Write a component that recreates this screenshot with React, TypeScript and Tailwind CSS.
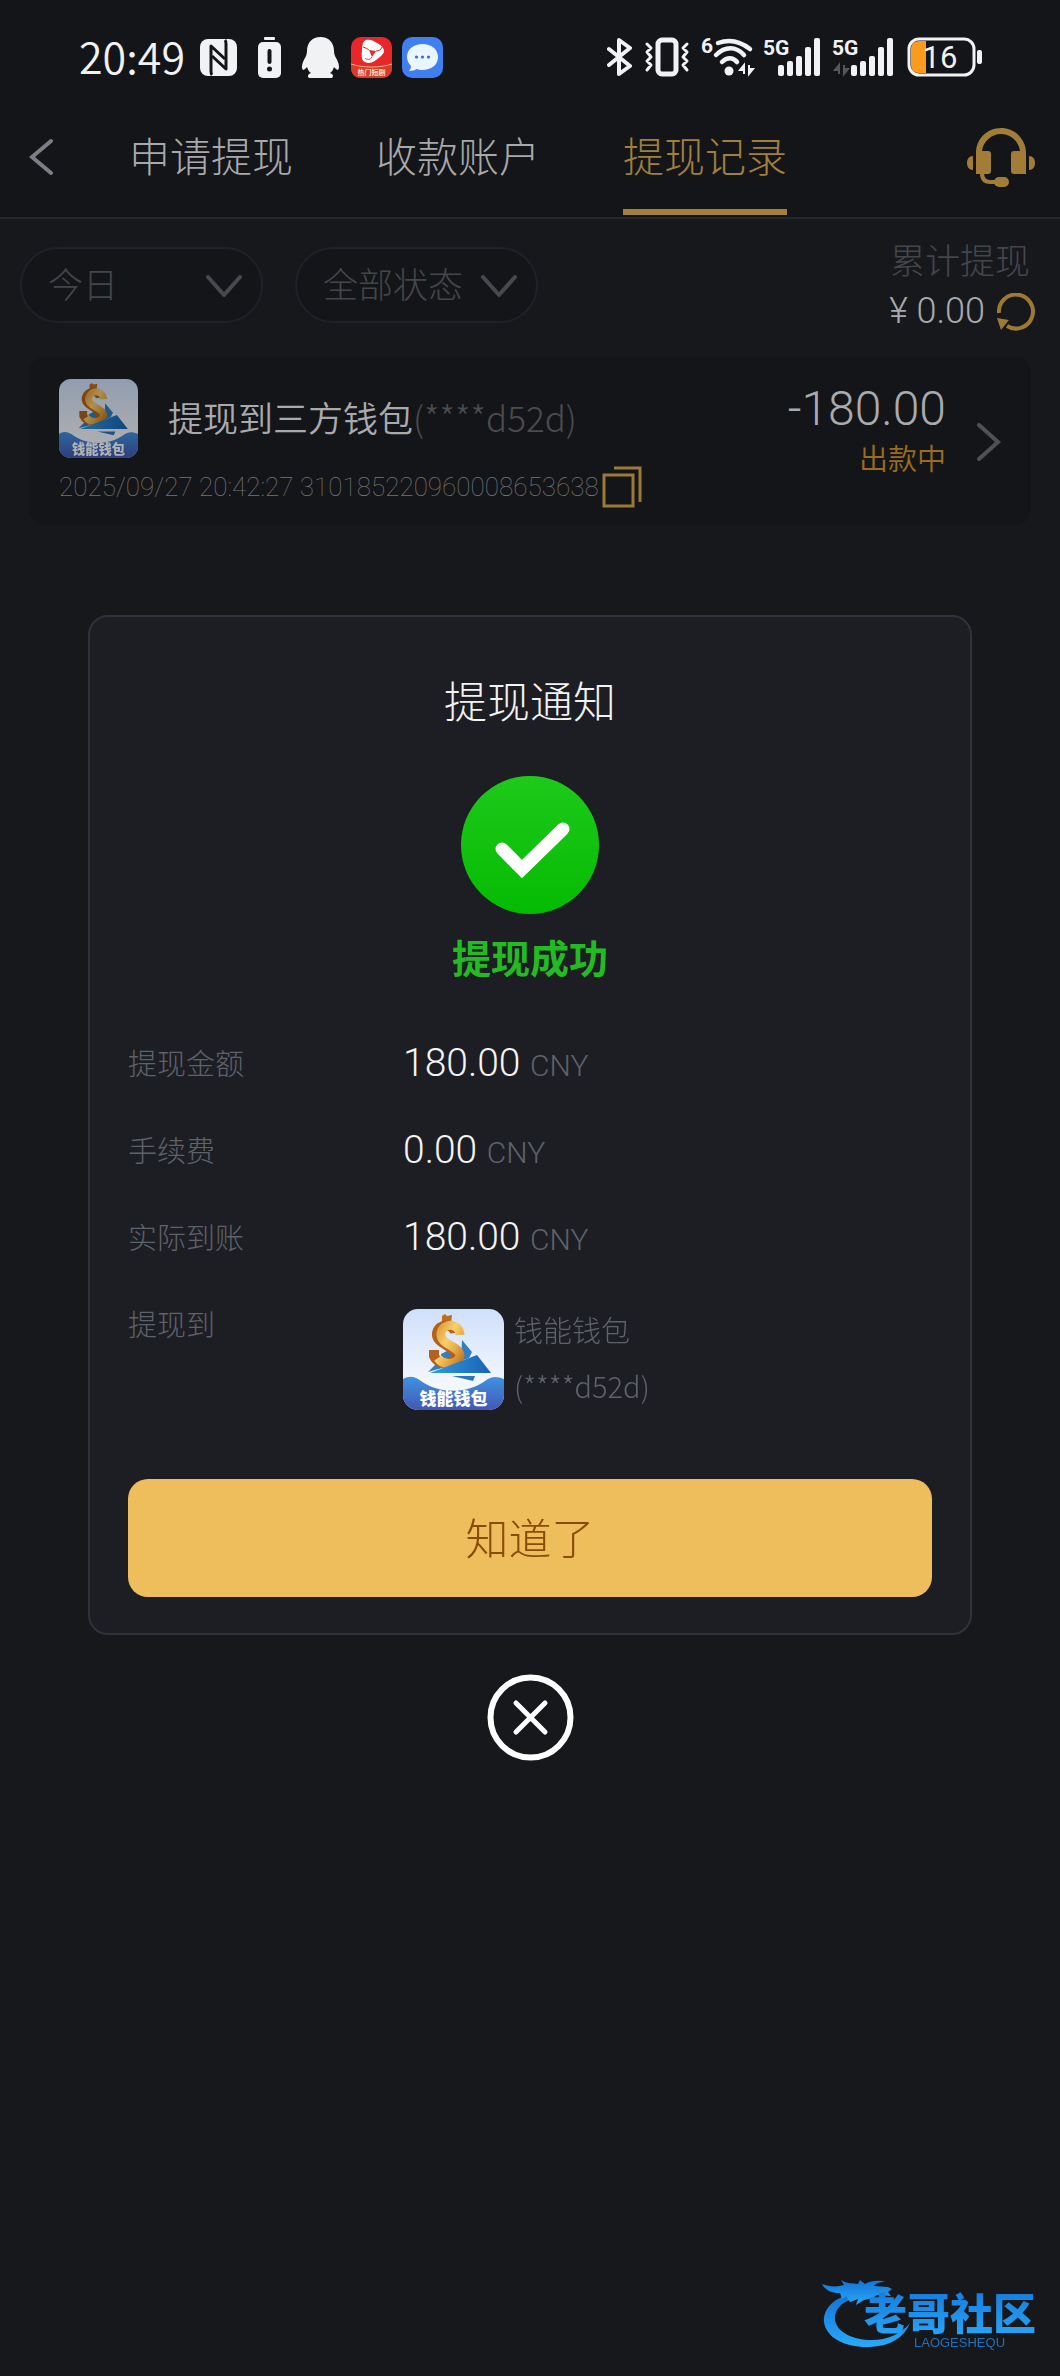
import type { ReactNode } from 'react';

interface FilterProps {
  label: string;
  options: string[];
}

interface DetailProps {
  label: string;
  children: ReactNode;
}

const tabs = ['申请提现', '收款账户', '提现记录'];

const amounts = [
  { label: '提现金额', value: '180.00' },
  { label: '手续费', value: '0.00' },
  { label: '实际到账', value: '180.00' },
];

function SignalBars({ x }: { x: number }) {
  return (
    <g fill="#f1f2f3">
      {[11, 15, 20, 29, 38].map((h, i) => (
        <rect key={h} x={x + i * 9} y={39 - h} width="6" height={h} rx="2" />
      ))}
    </g>
  );
}

function StatusBar() {
  return (
    <div className="flex h-[114px] items-center justify-between pl-[79px] pr-[77px] text-[#f1f2f3]">
      <div className="flex items-center gap-[10px]">
        <span className="w-[109px] whitespace-nowrap pb-1 text-[43px] leading-[48px] font-[350]">20:49</span>
        {/* NFC */}
        <svg width="41" height="41" viewBox="0 0 41 41" aria-hidden="true">
          <rect x="2" y="2" width="37" height="37" rx="8" fill="#f1f2f3" />
          <path d="M14 38c-1-1-1-2-1-4V9l14 13" fill="none" stroke="#141519" strokeWidth="3" strokeLinejoin="round" />
          <path d="M27 3c1 1 1 2 1 4v25L14 19" fill="none" stroke="#141519" strokeWidth="3" strokeLinejoin="round" />
        </svg>
        {/* low battery */}
        <svg width="41" height="41" viewBox="0 0 41 41" aria-hidden="true">
          <rect x="15" y="0" width="11" height="3" rx="1" fill="#f1f2f3" />
          <rect x="9" y="5" width="23" height="36" rx="5" fill="#f1f2f3" />
          <path d="M20.500 14v11" stroke="#141519" strokeWidth="4" strokeLinecap="round" />
          <circle cx="20.500" cy="32" r="2.500" fill="#141519" />
        </svg>
        {/* penguin */}
        <svg width="41" height="41" viewBox="0 0 41 41" fill="#f1f2f3" aria-hidden="true">
          <path d="M20.500 0C12 0 7 6 7 14c0 3-1 5-2 7-3 5-4 10-2 12 1 0 3-2 4-3 1 3 2 5 4 6-3 1-4 3-2 5h23c2-2 1-4-2-5 2-1 3-3 4-6 1 1 3 3 4 3 2-2 1-7-2-12-1-2-2-4-2-7C34 6 29 0 20.500 0z" />
        </svg>
        {/* video app */}
        <svg width="41" height="41" viewBox="0 0 41 41" aria-hidden="true">
          <rect width="41" height="41" rx="10" fill="#e8272b" />
          <path d="M0 27c12 4 29 4 41 0v4c0 6-4 10-10 10H10C4 41 0 37 0 31z" fill="#d93a2c" />
          <path d="M0 27c12 4 29 4 41 0" fill="none" stroke="#f0b183" strokeWidth="1" />
          <path d="M15 3c3-1 7 0 11 3 4 2 7 5 7 8s-4 6-8 9c-4 3-8 4-11 2-3-1-4-5-3-11 0-6 1-10 4-11z" fill="#fff" />
          <path d="M18 13l7 1-4 6z" fill="#e8272b" />
          <path d="M12 10c3 1 5 2 6 3M25 14c3 0 5-1 6-4M21 20c-2 3-5 3-7 1" fill="none" stroke="#e8272b" strokeWidth="1" />
          <text x="20.500" y="38" fontSize="7" textAnchor="middle" fontWeight="700" fill="#ffe3c8">热门短剧</text>
        </svg>
        {/* messages app */}
        <svg width="41" height="41" viewBox="0 0 41 41" aria-hidden="true">
          <rect width="41" height="41" rx="10" fill="#3f7ff0" />
          <path d="M20.500 7C12 7 5 12 5 20c0 4 2 7 4 9 0 2-1 4-2 5 3 0 6-1 8-2 2 1 4 1 5.500 1C29 33 36 28 36 20S29 7 20.500 7z" fill="#e9f5ff" />
          <g fill="#3d6fc4">
            <circle cx="14.500" cy="20" r="1.600" />
            <circle cx="20.500" cy="20" r="1.600" />
            <circle cx="26.500" cy="20" r="1.600" />
          </g>
        </svg>
      </div>

      <div className="flex items-center gap-3">
        {/* bluetooth */}
        <svg width="25" height="40" viewBox="0 0 25 40" fill="none" stroke="#f1f2f3" strokeWidth="4" strokeLinecap="round" strokeLinejoin="round" aria-hidden="true">
          <path d="M2 12l21 17-11 8V3l11 8L2 28" />
        </svg>
        {/* vibrate */}
        <svg width="46" height="40" viewBox="0 0 46 40" fill="none" stroke="#f1f2f3" strokeLinecap="round" strokeLinejoin="round" aria-hidden="true">
          <rect x="14" y="3" width="18" height="34" rx="4" strokeWidth="5" />
          <path d="M3 7l4 4-4 4 4 5-4 4 4 4-4 5M43 7l-4 4 4 4-4 5 4 4-4 4 4 5" strokeWidth="3" />
        </svg>
        {/* wifi */}
        <svg className="overflow-visible" width="51" height="40" viewBox="0 0 51 40" aria-hidden="true">
          <text x="-1" y="16" fontSize="21" fontWeight="700" fontFamily="Roboto, sans-serif" fill="#f1f2f3">6</text>
          <g fill="none" stroke="#f1f2f3" strokeWidth="4.500" strokeLinecap="round">
            <path d="M16 6c11-4 22-2 32 6" />
            <path d="M14 18c9-9 20-9 28 0" />
            <path d="M20 25c5-5 11-5 15 0" />
          </g>
          <circle cx="27" cy="34" r="4.500" fill="#f1f2f3" />
          <path d="M42 37V28l-4 5h4M47 28v9l4-5h-4" fill="#f1f2f3" stroke="#f1f2f3" strokeWidth="2" />
        </svg>
        <svg className="overflow-visible" width="57" height="40" viewBox="0 0 57 40" aria-hidden="true">
          <text x="-2" y="18" fontSize="21" fontWeight="700" fontFamily="Roboto, sans-serif" fill="#f1f2f3">5G</text>
          <SignalBars x={13} />
        </svg>
        <svg className="overflow-visible" width="61" height="40" viewBox="0 0 61 40" aria-hidden="true">
          <text x="-2" y="18" fontSize="21" fontWeight="700" fontFamily="Roboto, sans-serif" fill="#f1f2f3">5G</text>
          <path d="M5 37V28l-4 5h4M10 28v9l4-5h-4" fill="#55575b" stroke="#55575b" strokeWidth="2" />
          <SignalBars x={17} />
        </svg>
        {/* battery level */}
        <svg className="overflow-visible" width="76" height="40" viewBox="0 0 76 40" aria-hidden="true">
          <path d="M12 4h7v32h-7c-5 0-8-3-8-8V12c0-5 3-8 8-8z" fill="#fb9a1c" />
          <rect x="2" y="2" width="65" height="36" rx="10" fill="none" stroke="#f1f2f3" strokeWidth="3" />
          <rect x="70" y="13" width="5" height="14" rx="2" fill="#f1f2f3" />
          <text x="33" y="31" fontSize="31" textAnchor="middle" fontFamily="Roboto, sans-serif" fill="#f1f2f3">16</text>
        </svg>
      </div>
    </div>
  );
}

function Header() {
  return (
    <header className="flex h-[105px] items-start justify-between border-b-2 border-[#26272b] pl-[29px] pr-[25px]">
      <div className="flex">
        <button type="button" aria-label="返回" className="flex h-[86px] w-[25px] items-center">
          <svg width="25" height="38" viewBox="0 0 25 38" fill="none" stroke="#7c7e85" strokeWidth="4" strokeLinecap="round" aria-hidden="true">
            <path d="M22 3L3 19l19 16" />
          </svg>
        </button>
        <nav className="ml-[75px] flex gap-[83px]">
          {tabs.map((tab, i) => {
            const active = i === tabs.length - 1;
            return (
              <a key={tab} href="#" className={active ? 'text-[#a1803c]' : 'text-[#a8a9ab]'}>
                <span className="block text-[41px] leading-[80px] font-light">{tab}</span>
                {active && <span className="mt-[15px] block h-[6px] bg-[#a1803c]" />}
              </a>
            );
          })}
        </nav>
      </div>
      <button type="button" aria-label="客服" className="flex h-[88px] items-center">
        <svg width="68" height="60" viewBox="0 0 68 60" aria-hidden="true">
          <g fill="#a17d38">
            <path d="M9 46V25C9 11 20 0 34 0s25 11 25 25v21H47c-2 0-3-1-3-3V26c0-2 1-3 3-3h6C52 14 44 6 34 6S16 14 15 23h6c2 0 3 1 3 3v17c0 2-1 3-3 3z" />
            <path d="M6 28v14C2 42 0 39 0 35s2-7 6-7zM62 28v14c4 0 6-3 6-7s-2-7-6-7z" />
            <rect x="27" y="49" width="15" height="10" rx="5" />
          </g>
          <path d="M15 45c0 6 3 9 8 9h6" fill="none" stroke="#a17d38" strokeWidth="4" />
        </svg>
      </button>
    </header>
  );
}

function Filter({ label, options }: FilterProps) {
  return (
    <div className="relative">
      <select
        aria-label={label}
        className="h-[76px] w-[243px] appearance-none rounded-full border-2 border-[#202129] bg-[#141518] pb-1 pl-[26px] text-[35px] font-light text-[#44464b] outline-none"
      >
        {options.map((o) => <option key={o}>{o}</option>)}
      </select>
      <svg className="pointer-events-none absolute right-5 top-[27px]" width="38" height="24" viewBox="0 0 38 24" fill="none" stroke="#47494e" strokeWidth="4" strokeLinecap="round" strokeLinejoin="round" aria-hidden="true">
        <path d="M3 3l16 18L35 3" />
      </svg>
    </div>
  );
}

function WalletLogo({ size, dim }: { size: number; dim?: boolean }) {
  const id = dim ? 'dim' : 'full';
  return (
    <svg width={size} height={size} viewBox="0 0 101 101" className={dim ? 'shrink-0 brightness-[.7]' : 'shrink-0'} role="img" aria-label="钱能钱包">
      <defs>
        <clipPath id={`clip-${id}`}><rect width="101" height="101" rx="15" /></clipPath>
        <linearGradient id={`sky-${id}`} x1="0" y1="0" x2="0" y2="1">
          <stop offset="0" stopColor="#cfe0fb" />
          <stop offset=".7" stopColor="#f2f6fd" />
        </linearGradient>
        <linearGradient id={`sea-${id}`} x1="0" y1="0" x2="0" y2="1">
          <stop offset="0" stopColor="#3f93e2" />
          <stop offset="1" stopColor="#4457b4" />
        </linearGradient>
        <linearGradient id={`gold-${id}`} x1="0" y1="0" x2="1" y2="1">
          <stop offset="0" stopColor="#e09a3c" />
          <stop offset=".4" stopColor="#f8d06c" />
          <stop offset=".7" stopColor="#e6ab45" />
          <stop offset="1" stopColor="#c07a2a" />
        </linearGradient>
        <linearGradient id={`boat-${id}`} x1="0" y1="0" x2="1" y2="0">
          <stop offset="0" stopColor="#2f9be0" />
          <stop offset="1" stopColor="#1a61b4" />
        </linearGradient>
      </defs>
      <g clipPath={`url(#clip-${id})`}>
        <rect width="101" height="101" fill={`url(#sky-${id})`} />
        <path d="M59 31l10 12-3 6-8 3zM38 45l10-5 2 12-12 5zM25 63l8-8 6 4z" fill="#2f7fc4" />
        <path d="M39 7l3-2 2 2 5-1-1 9-9 2z" fill="#bd6d20" />
        <path d="M52 24c-1-10-16-10-18 0-2 11 20 13 19 23-1 9-18 10-22 0v-6" fill="none" stroke="#b3621d" strokeWidth="10" />
        <path d="M57 26c-1-13-17-12-19-2-2 12 20 13 19 23-2 9-17 10-22 2" fill="none" stroke={`url(#gold-${id})`} strokeWidth="9" />
        <path d="M27 64l47-18 14 18z" fill={`url(#boat-${id})`} />
        <path d="M49 67h23l-2 5z" fill="#2477c2" />
        <path d="M0 70c7-4 13-2 18 2 18 13 46 13 64 0 6-5 12-5 19-2v31H0z" fill={`url(#sea-${id})`} />
        <text x="50.500" y="96" fontSize="17" fontWeight="900" textAnchor="middle" fill="#fff">钱能钱包</text>
      </g>
    </svg>
  );
}

function RecordCard() {
  return (
    <section className="mx-[29px] flex items-center rounded-2xl bg-[#141518] px-[30px] pb-[17px] pt-[22px]">
      <div className="flex-1">
        <div className="flex items-center">
          <WalletLogo size={79} dim />
          <p className="ml-[30px] whitespace-nowrap pb-1 text-[35px] leading-[75px] font-[350] text-[#a9aaad]">
            提现到三方钱包<span className="font-light text-[#4b4c50]">(****d52d)</span>
          </p>
        </div>
        <div className="mt-2 flex items-center gap-[3px]">
          <p className="whitespace-nowrap font-[Roboto] text-[26px] leading-[42px] font-thin text-[#74757a]">
            2025/09/27 20:42:27 310185220960008653638
          </p>
          <button type="button" aria-label="复制">
            <svg width="40" height="42" viewBox="0 0 40 42" fill="none" stroke="#9c7a36" strokeWidth="3" aria-hidden="true">
              <path d="M2 9h29v31H2z" />
              <path d="M12 2h26v34" />
            </svg>
          </button>
        </div>
      </div>
      <div className="pb-6 text-right">
        <p className="font-[Roboto] text-[48px] leading-[50px] font-light text-[#a9aaad]">-180.00</p>
        <p className="text-[29px] leading-[46px] font-[350] text-[#9a6c1c]">出款中</p>
      </div>
      <svg className="mb-1 ml-[31px]" width="24" height="38" viewBox="0 0 24 38" fill="none" stroke="#505155" strokeWidth="4" strokeLinecap="round" aria-hidden="true">
        <path d="M2 2l19 17L2 36" />
      </svg>
    </section>
  );
}

function DetailRow({ label, children }: DetailProps) {
  return (
    <div className="grid grid-cols-[275px_1fr]">
      <dt className="text-[29px] leading-[84px] font-light text-[#5e626b]">{label}</dt>
      <dd>{children}</dd>
    </div>
  );
}

function NoticeDialog() {
  return (
    <div className="fixed inset-0 flex flex-col items-center justify-center px-[88px]">
      <div role="dialog" aria-labelledby="notice-title" className="w-full rounded-[20px] border-2 border-[#30313b] bg-[#1d1e23] px-[38px] pb-9 pt-[52px]">
        <h2 id="notice-title" className="text-center text-[43px] leading-[60px] font-light text-[#f2f2f4]">提现通知</h2>
        <svg className="mx-auto mt-[47px] block" width="138" height="138" viewBox="0 0 138 138" aria-hidden="true">
          <defs>
            <linearGradient id="ok" x1="0" y1="0" x2="0" y2="1">
              <stop offset="0" stopColor="#1ec91a" />
              <stop offset="1" stopColor="#05bb02" />
            </linearGradient>
          </defs>
          <circle cx="69" cy="69" r="69" fill="url(#ok)" />
          <path d="M41 73l20 20 41-40" fill="none" stroke="#fff" strokeWidth="13" strokeLinecap="round" strokeLinejoin="miter" />
        </svg>
        <p className="mt-[13px] text-center text-[39px] leading-[58px] font-bold text-[#22bb22]">提现成功</p>

        <dl className="mt-[35px]">
          {amounts.map((row) => (
            <DetailRow key={row.label} label={row.label}>
              <p className="h-[87px] font-[Roboto] text-[39px] leading-[87px] font-light text-[#f4f4f5]">
                {row.value} <span className="text-[30px] leading-none font-light text-[#5c616a]">CNY</span>
              </p>
            </DetailRow>
          ))}
          <DetailRow label="提现到">
            <div className="mt-5 flex items-center gap-[10px] text-[29px] leading-[56px] font-light text-[#5e626b]">
              <WalletLogo size={101} />
              <p className="pb-1">
                钱能钱包
                <br />
                (****d52d)
              </p>
            </div>
          </DetailRow>
        </dl>

        <button type="button" className="mt-[62px] block h-[118px] w-full rounded-[20px] bg-[#efbe5c] pb-1 text-[43px] font-light text-[#8a4b05]">
          知道了
        </button>
      </div>
      <button type="button" aria-label="关闭" className="mt-[39px]">
        <svg width="87" height="87" viewBox="0 0 87 87" fill="none" stroke="#fff" aria-hidden="true">
          <circle cx="43.500" cy="43.500" r="40" strokeWidth="6" />
          <path d="M29 29l29 29M58 29L29 58" strokeWidth="5" strokeLinecap="round" />
        </svg>
      </button>
    </div>
  );
}

function Watermark() {
  return (
    <svg className="fixed bottom-[24px] right-[16px] overflow-visible" width="224" height="76" viewBox="0 0 224 76" role="img" aria-label="老哥社区">
      <defs>
        <linearGradient id="mark" x1="0" y1="0" x2="0" y2="1">
          <stop offset="0" stopColor="#1173d8" />
          <stop offset="1" stopColor="#2ba9f8" />
        </linearGradient>
      </defs>
      <g fill="url(#mark)">
        <path d="M32 18C12 22 3 34 4 46c2 16 22 26 46 25 20-1 34-9 40-24-9 11-23 17-38 17-20 0-35-8-37-20-1-9 5-17 17-21z" />
        <path d="M2 8c8 3 15 3 22 1l-3-5c6 4 12 3 17 4l2-4 5 4c6-4 16-4 20-2-5 0-9 1-11 4l14 1 4 2-4 3 3 4-14-1-4 3-9 2-8 5 2-6-8 3-4-6-4 3-2-6c-6 0-14-1-18-9z" />
        <text x="44" y="54" fontSize="43" fontWeight="900">老哥社区</text>
      </g>
      <text x="94" y="71" fontSize="13" fill="#1c72bd" fontFamily="Liberation Sans, sans-serif">LAOGESHEQU</text>
    </svg>
  );
}

export default function App() {
  return (
    <div className="min-h-screen bg-[#17181c] font-['Noto_Sans_CJK_SC',sans-serif]">
      <div className="bg-[#141519]">
        <StatusBar />
        <Header />
      </div>
      <main>
        <div className="flex h-[138px] items-start justify-between pl-5 pr-[25px]">
          <div className="flex gap-8 pt-7">
            <Filter label="日期" options={['今日']} />
            <Filter label="状态" options={['全部状态']} />
          </div>
          <div className="pt-[15px]">
            <p className="pr-[5px] text-right text-[35px] leading-[49px] font-light text-[#44464b]">累计提现</p>
            <div className="mt-1 flex items-center justify-end gap-3">
              <span className="font-[Roboto] text-[36px] leading-[49px] font-light text-[#a9aaad]">¥ 0.00</span>
              <button type="button" aria-label="刷新">
                <svg width="38" height="38" viewBox="0 0 38 38" aria-hidden="true">
                  <path d="M2 20a17 17 0 1 1 8 13" fill="none" stroke="#9c7a36" strokeWidth="4" />
                  <path d="M0 25l12 2-8 10z" fill="#9c7a36" />
                </svg>
              </button>
            </div>
          </div>
        </div>
        <RecordCard />
      </main>
      <NoticeDialog />
      <Watermark />
    </div>
  );
}
